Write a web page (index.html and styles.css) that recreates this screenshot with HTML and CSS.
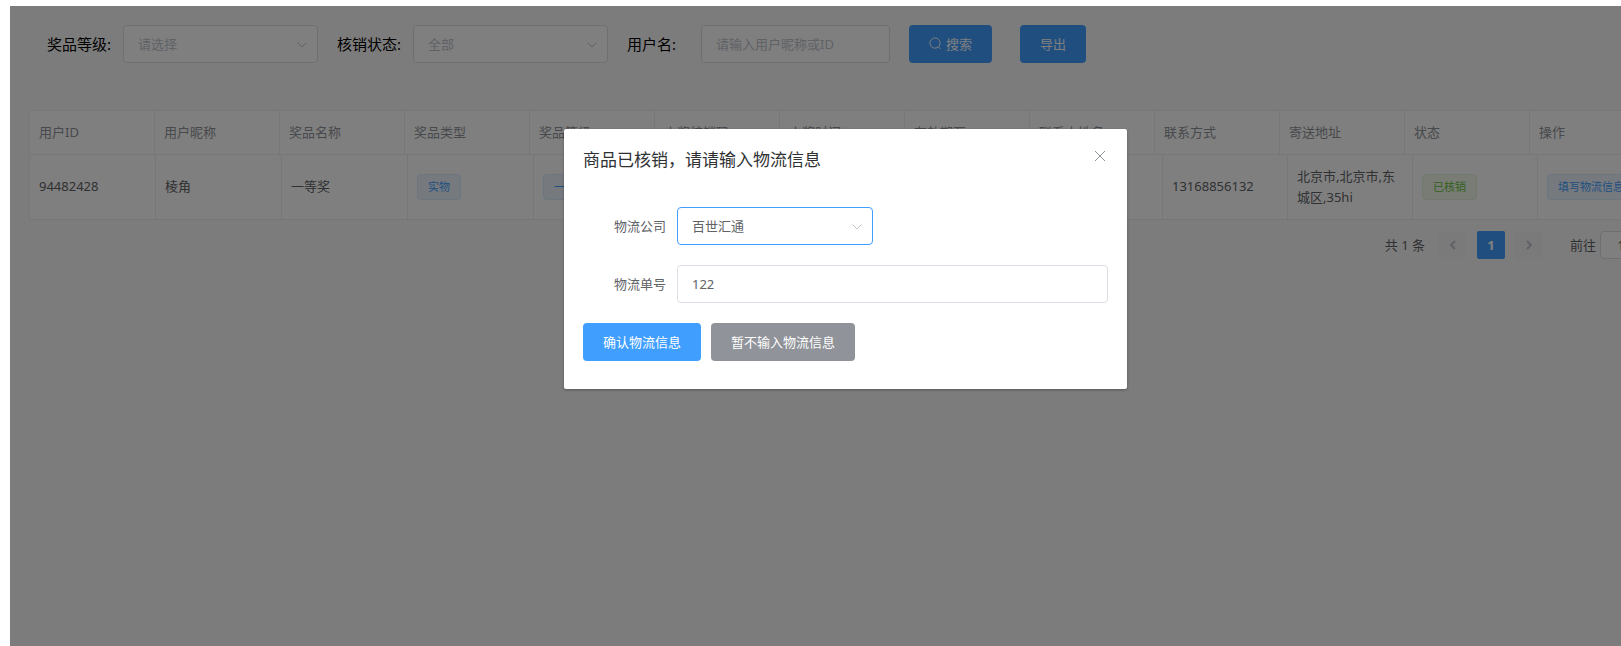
FILE: index.html
```
<!DOCTYPE html>
<html lang="zh-CN">
<head>
    <meta charset="UTF-8">
    <meta name="viewport" content="width=device-width, initial-scale=1.0">
    <title>奖品核销</title>
    <link rel="stylesheet" href="styles.css">
</head>
<body>
    <div class="page">
        <form class="filters">
            <div class="filter-item">
                <label for="level">奖品等级:</label>
                <div class="select-box">
                    <select id="level" class="control placeholder">
                        <option>请选择</option>
                    </select>
                    <svg class="arrow" viewBox="0 0 10 6"><path d="M0.5 0.5L5 5L9.5 0.5"/></svg>
                </div>
            </div>
            <div class="filter-item">
                <label for="status">核销状态:</label>
                <div class="select-box">
                    <select id="status" class="control placeholder">
                        <option>全部</option>
                    </select>
                    <svg class="arrow" viewBox="0 0 10 6"><path d="M0.5 0.5L5 5L9.5 0.5"/></svg>
                </div>
            </div>
            <div class="filter-item user-item">
                <label for="username">用户名:</label>
                <input type="text" id="username" class="control user-input" placeholder="请输入用户昵称或ID">
            </div>
            <button type="button" class="btn btn-primary search-btn">
                <svg class="search-icon" viewBox="0 0 14 14"><circle cx="6.5" cy="6.5" r="5.5"/><path d="M10 10.5L12.5 13"/></svg>
                搜索
            </button>
            <button type="button" class="btn btn-primary export-btn">导出</button>
        </form>

        <div class="table-wrap">
            <table class="table table-head">
                <thead>
                    <tr>
                        <th>用户ID</th>
                        <th>用户昵称</th>
                        <th>奖品名称</th>
                        <th>奖品类型</th>
                        <th>奖品等级</th>
                        <th>中奖核销码</th>
                        <th>中奖时间</th>
                        <th>有效期至</th>
                        <th>联系人姓名</th>
                        <th>联系方式</th>
                        <th>寄送地址</th>
                        <th>状态</th>
                        <th>操作</th>
                    </tr>
                </thead>
            </table>
            <table class="table table-body">
                <colgroup>
                    <col class="col-wide" span="8">
                    <col class="col" span="5">
                </colgroup>
                <tbody>
                    <tr>
                        <td>94482428</td>
                        <td>棱角</td>
                        <td>一等奖</td>
                        <td><span class="tag">实物</span></td>
                        <td><span class="tag">一等奖</span></td>
                        <td></td>
                        <td></td>
                        <td></td>
                        <td></td>
                        <td>13168856132</td>
                        <td>北京市,北京市,东城区,35hi</td>
                        <td><span class="tag tag-success">已核销</span></td>
                        <td><button type="button" class="tag">填写物流信息</button></td>
                    </tr>
                </tbody>
            </table>
        </div>

        <div class="pagination">
            <span class="total">共 1 条</span>
            <button type="button" class="page-btn" aria-label="上一页" disabled>
                <svg viewBox="0 0 6 10"><path d="M5 1L1 5L5 9"/></svg>
            </button>
            <button type="button" class="page-btn active">1</button>
            <button type="button" class="page-btn" aria-label="下一页" disabled>
                <svg viewBox="0 0 6 10"><path d="M1 1L5 5L1 9"/></svg>
            </button>
            <label class="jump" for="jump">前往</label>
            <input type="text" id="jump" class="jump-input" value="1">
        </div>

        <div class="overlay">
            <div class="dialog" role="dialog" aria-labelledby="dialogTitle">
                <div class="dialog-header">
                    <h2 id="dialogTitle">商品已核销，请请输入物流信息</h2>
                    <button type="button" class="close-btn" aria-label="关闭">
                        <svg viewBox="0 0 12 12"><path d="M1 1L11 11M11 1L1 11"/></svg>
                    </button>
                </div>
                <form class="dialog-form">
                    <div class="form-item">
                        <label for="company">物流公司</label>
                        <div class="select-box">
                            <select id="company" class="control focused">
                                <option>百世汇通</option>
                            </select>
                            <svg class="arrow" viewBox="0 0 10 6"><path d="M0.5 0.5L5 5L9.5 0.5"/></svg>
                        </div>
                    </div>
                    <div class="form-item">
                        <label for="number">物流单号</label>
                        <input type="text" id="number" class="control" value="122">
                    </div>
                    <div class="dialog-btns">
                        <button type="button" class="btn btn-primary">确认物流信息</button>
                        <button type="button" class="btn btn-info">暂不输入物流信息</button>
                    </div>
                </form>
            </div>
        </div>
    </div>
</body>
</html>
```
FILE: styles.css
```
* {
    margin: 0;
    padding: 0;
    box-sizing: border-box;
}

body {
    font-family: "Noto Sans", "Noto Sans CJK SC", sans-serif;
    font-size: 13px;
    color: #606266;
    background: #fff;
    min-height: 100vh;
    padding: 6px 0 0 10px;
    display: flex;
    overflow: hidden;
}

button,
input,
select {
    font-family: inherit;
    font-size: 13px;
}

button {
    cursor: pointer;
}

svg {
    fill: none;
    stroke: currentColor;
}

.page {
    position: relative;
    flex: 1;
    min-width: 0;
    background: #f9f9f9;
}

/* filters */
.filters {
    display: flex;
    align-items: center;
    padding: 19px 37px 0;
}

.filter-item {
    display: flex;
    align-items: center;
    gap: 12px;
    margin-right: 19px;
}

.filter-item label {
    padding-bottom: 2px;
    font-size: 15px;
    color: #000;
    white-space: nowrap;
}

.user-item {
    gap: 25px;
}

.control {
    display: block;
    width: 100%;
    height: 38px;
    padding: 0 14px;
    color: #606266;
    background: #fff;
    border: 1px solid #dcdfe6;
    border-radius: 4px;
    outline: none;
    appearance: none;
}

.control::placeholder,
.placeholder {
    color: #c0c4cc;
}

.focused {
    border-color: #409eff;
}

.select-box {
    position: relative;
    width: 196px;
}

.filter-item .select-box {
    width: 195px;
}

.user-input {
    width: 189px;
}

.arrow {
    position: absolute;
    right: 11px;
    top: 17px;
    width: 10px;
    height: 6px;
    color: #c0c4cc;
    pointer-events: none;
}

.btn {
    display: flex;
    align-items: center;
    justify-content: center;
    gap: 4px;
    height: 38px;
    padding: 0 20px 2px;
    color: #fff;
    border: none;
    border-radius: 4px;
    white-space: nowrap;
}

.btn-primary {
    background: #409eff;
}

.btn-info {
    background: #909399;
}

.search-icon {
    width: 13px;
    height: 13px;
}

.export-btn {
    margin-left: 28px;
}

/* table */
.table-wrap {
    margin: 47px 0 0 19px;
    overflow: hidden;
}

.table {
    table-layout: fixed;
    border-collapse: collapse;
    background: #fff;
}

.table-head {
    width: 1626px;
}

.table-body {
    width: 1633px;
}

.col-wide {
    width: 126px;
}

.col {
    width: 125px;
}

.table th,
.table td {
    padding: 0 9px;
    border: 1px solid #ebeef5;
    text-align: left;
    line-height: 21px;
}

.table th {
    height: 44px;
    color: #909399;
    font-weight: normal;
}

.table td {
    height: 64px;
    border-top: none;
    white-space: normal;
}

.tag {
    display: inline-block;
    height: 26px;
    padding: 0 10px;
    font-size: 11px;
    line-height: 24px;
    color: #409eff;
    background: #ecf5ff;
    border: 1px solid #d9ecff;
    border-radius: 4px;
    white-space: nowrap;
}

.tag-success {
    color: #67c23a;
    background: #f0f9eb;
    border-color: #e1f3d8;
}

/* pagination */
.pagination {
    display: flex;
    align-items: center;
    justify-content: flex-end;
    margin-top: 11px;
    margin-right: -21px;
    gap: 10px;
}

.total {
    margin-right: 4px;
}

.page-btn {
    display: flex;
    align-items: center;
    justify-content: center;
    width: 28px;
    height: 28px;
    color: #606266;
    background: #f4f4f5;
    border: none;
    border-radius: 2px;
    font-weight: bold;
}

.page-btn:disabled {
    color: #c0c4cc;
}

.page-btn svg {
    width: 6px;
    height: 10px;
    stroke-width: 2;
}

.page-btn.active {
    color: #fff;
    background: #409eff;
}

.jump {
    margin-left: 17px;
}

.jump-input {
    width: 42px;
    height: 28px;
    margin-left: -6px;
    text-align: center;
    color: #606266;
    background: #fff;
    border: 1px solid #dcdfe6;
    border-radius: 4px;
}

/* dialog, the mask runs on past the right edge like the table */
.overlay {
    position: absolute;
    top: 0;
    right: -60px;
    bottom: 0;
    left: 0;
    display: flex;
    justify-content: center;
    align-items: flex-start;
    padding-top: 123px;
    background: rgba(0, 0, 0, 0.5);
}

.dialog {
    width: 563px;
    background: #fff;
    border-radius: 2px;
    box-shadow: 0 1px 3px rgba(0, 0, 0, 0.3);
}

.dialog-header {
    display: flex;
    justify-content: space-between;
    padding: 19px 19px 8px;
}

.dialog-header h2 {
    font-size: 17px;
    font-weight: normal;
    line-height: 24px;
    color: #303133;
}

.close-btn {
    width: 16px;
    height: 16px;
    color: #909399;
    background: none;
    border: none;
}

.close-btn svg {
    width: 12px;
    height: 12px;
}

.dialog-form {
    padding: 27px 19px 28px;
}

.form-item {
    display: flex;
    align-items: center;
    margin-bottom: 20px;
}

.form-item label {
    flex: none;
    width: 94px;
    padding: 0 11px 2px 0;
    text-align: right;
}

.dialog-btns {
    display: flex;
    gap: 10px;
}
```
